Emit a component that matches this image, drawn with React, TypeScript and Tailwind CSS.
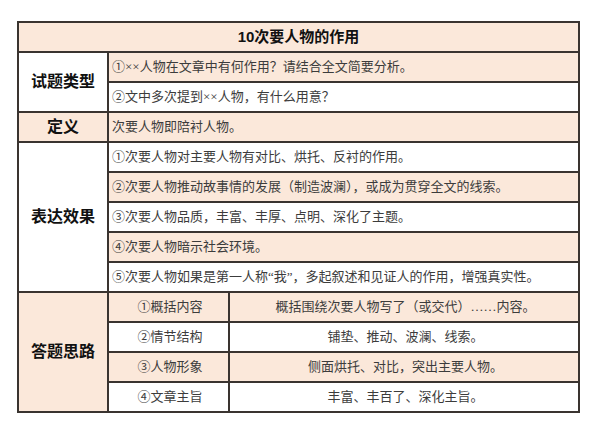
import React from "react";

const P = "bg-[#fbe8da]";
const W = "bg-white";
const cellB = "border-2 border-[#3a3430]";

export default function App() {
  const font = { fontFamily: '"Liberation Serif", "Noto Sans CJK SC", serif' };
  const sans = { fontFamily: '"Liberation Sans", "Noto Sans CJK SC", sans-serif' };
  const bodyTd = `${cellB} h-[30px] pl-[3px] text-[13px] text-[#3c3c3c] align-middle whitespace-nowrap`;
  const catTd = `${cellB} text-center align-middle text-[16px] font-bold text-[#111]`;
  return (
    <div className="w-[597px] h-[423px] bg-white pt-[21px] pl-[17px]" style={font}>
      <table className="border-collapse w-[563px] table-fixed">
        <colgroup>
          <col className="w-[90px]" />
          <col className="w-[121px]" />
          <col />
        </colgroup>
        <tbody>
          <tr className="h-[30px]">
            <td colSpan={3} style={sans} className={`${cellB} ${P} text-center font-bold text-[15px] text-[#111]`}>
              10次要人物的作用
            </td>
          </tr>
          <tr className="h-[30px]">
            <td rowSpan={2} style={sans} className={`${catTd} ${W}`}>试题类型</td>
            <td colSpan={2} className={`${bodyTd} ${P}`}>①××人物在文章中有何作用？请结合全文简要分析。</td>
          </tr>
          <tr className="h-[30px]">
            <td colSpan={2} className={`${bodyTd} ${W}`}>②文中多次提到××人物，有什么用意？</td>
          </tr>
          <tr className="h-[30px]">
            <td style={sans} className={`${catTd} ${P}`}>定义</td>
            <td colSpan={2} className={`${bodyTd} ${P}`}>次要人物即陪衬人物。</td>
          </tr>
          <tr className="h-[30px]">
            <td rowSpan={5} style={sans} className={`${catTd} ${W}`}>表达效果</td>
            <td colSpan={2} className={`${bodyTd} ${W}`}>①次要人物对主要人物有对比、烘托、反衬的作用。</td>
          </tr>
          <tr className="h-[30px]">
            <td colSpan={2} className={`${bodyTd} ${P}`}>②次要人物推动故事情的发展（制造波澜），或成为贯穿全文的线索。</td>
          </tr>
          <tr className="h-[30px]">
            <td colSpan={2} className={`${bodyTd} ${W}`}>③次要人物品质，丰富、丰厚、点明、深化了主题。</td>
          </tr>
          <tr className="h-[30px]">
            <td colSpan={2} className={`${bodyTd} ${P}`}>④次要人物暗示社会环境。</td>
          </tr>
          <tr className="h-[30px]">
            <td colSpan={2} className={`${bodyTd} ${W}`}>⑤次要人物如果是第一人称“我”，多起叙述和见证人的作用，增强真实性。</td>
          </tr>
          <tr className="h-[30px]">
            <td rowSpan={4} style={sans} className={`${catTd} ${P}`}>答题思路</td>
            <td className={`${bodyTd} ${P} text-center`}>①概括内容</td>
            <td className={`${bodyTd} ${P} text-center`}>概括围绕次要人物写了（或交代）……内容。</td>
          </tr>
          <tr className="h-[30px]">
            <td className={`${bodyTd} ${W} text-center`}>②情节结构</td>
            <td className={`${bodyTd} ${W} text-center`}>铺垫、推动、波澜、线索。</td>
          </tr>
          <tr className="h-[30px]">
            <td className={`${bodyTd} ${P} text-center`}>③人物形象</td>
            <td className={`${bodyTd} ${P} text-center`}>侧面烘托、对比，突出主要人物。</td>
          </tr>
          <tr className="h-[30px]">
            <td className={`${bodyTd} ${W} text-center`}>④文章主旨</td>
            <td className={`${bodyTd} ${W} text-center`}>丰富、丰百了、深化主旨。</td>
          </tr>
        </tbody>
      </table>
    </div>
  );
}
